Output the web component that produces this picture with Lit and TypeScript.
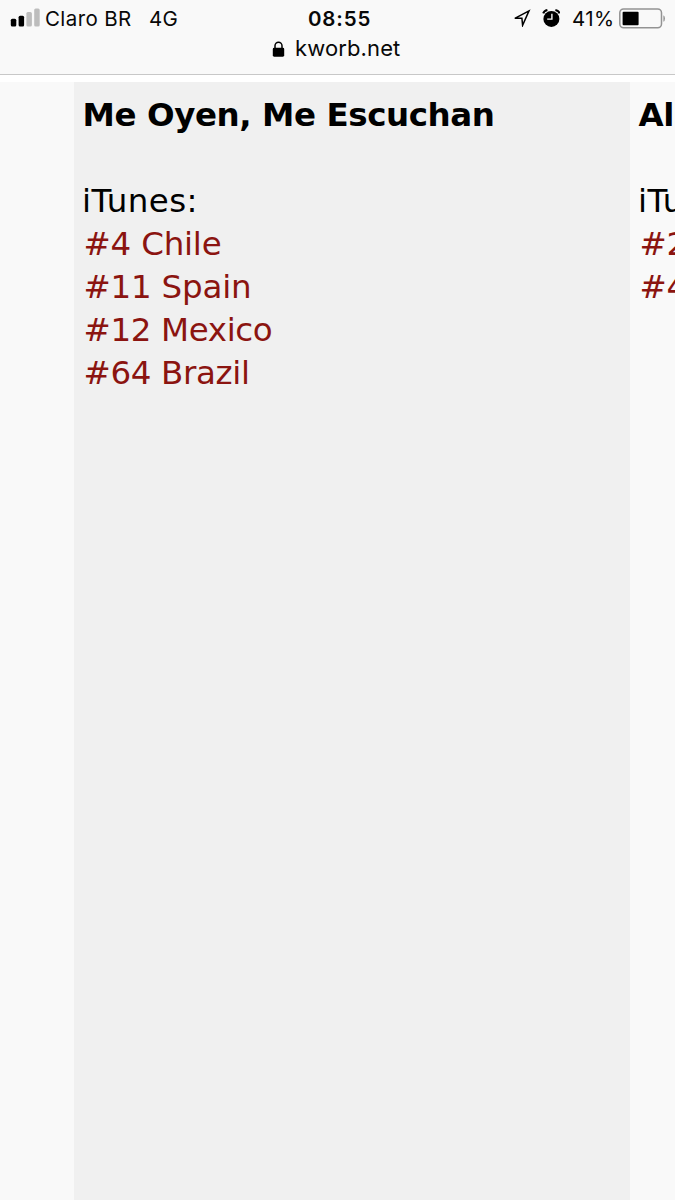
import { LitElement, html, css } from "lit";
import { customElement, property } from "lit/decorators.js";

interface Entry { text: string; cls: string }

@customElement("status-bar")
class StatusBar extends LitElement {
  static styles = css`
    :host { display: block; height: 75px; box-sizing: border-box; background: #f9f9f9; border-bottom: 1px solid #c8c8c8; color: #080808; font-family: Inter, "Liberation Sans", sans-serif; font-size: 20.5px; }
    .row { display: grid; grid-template-columns: 308px 72px 1fr; height: 37px; line-height: 37px; white-space: pre; }
    .left, .right { display: flex; align-items: center; }
    .signal { width: 30px; height: 20px; margin-left: 10px; margin-right: 5px; margin-top: -1px; flex: none; }
    .carrier { width: 104px; letter-spacing: 0.4px; }
    .net { letter-spacing: 0.3px; }
    .time { font-weight: 600; letter-spacing: 0.85px; }
    .loc { width: 18px; height: 18px; margin-left: 133px; margin-top: -2px; flex: none; }
    .alarm { width: 18px; height: 18px; margin-left: 11px; margin-top: -2px; flex: none; }
    .pct { width: 41px; margin-left: 12px; letter-spacing: 0.4px; }
    .battery { width: 47px; height: 21px; margin-left: 6px; margin-top: -1px; flex: none; }
    .address { display: flex; height: 22px; line-height: 22px; font-size: 22px; align-items: center; padding-left: 272px; letter-spacing: 0.12px; }
    .lock { width: 13px; height: 16px; margin-right: 10px; margin-top: 1px; }
  `;
  render() {
    return html`
      <div class="row">
        <div class="left">
          <svg class="signal" viewBox="0 0 30 20">
            <rect x="0.8" y="10.7" width="5.5" height="7.8" rx="1.5" fill="#000"/>
            <rect x="8.6" y="7.7" width="5.5" height="10.8" rx="1.5" fill="#000"/>
            <rect x="16.4" y="4" width="5.5" height="14.5" rx="1.5" fill="#bdbdbd"/>
            <rect x="24.2" y="0.5" width="5.5" height="18" rx="1.5" fill="#bdbdbd"/>
          </svg>
          <span class="carrier">Claro BR</span><span class="net">4G</span>
        </div>
        <div class="time">08:55</div>
        <div class="right">
          <svg class="loc" viewBox="0 0 18 18"><path d="M1.8 9.3 16 1.8 9.6 16.3 8.9 9.3Z" fill="none" stroke="#000" stroke-width="1.5" stroke-linejoin="miter"/></svg>
          <svg class="alarm" viewBox="0 0 18 18">
            <circle cx="9.4" cy="9.9" r="8" fill="#000"/>
            <path d="M1.2 4.4Q2 1.8 5.4 1M17.6 4.4Q16.8 1.8 13.4 1" fill="none" stroke="#000" stroke-width="2"/>
            <path d="M9.9 4.8V10.1H5.2" fill="none" stroke="#f9f9f9" stroke-width="1.4"/>
          </svg>
          <span class="pct">41%</span>
          <svg class="battery" viewBox="0 0 47 21">
            <rect x="0.8" y="1" width="41.7" height="18.8" rx="3.8" fill="none" stroke="#939393" stroke-width="1.5"/>
            <rect x="3.6" y="3.8" width="16" height="13.5" rx="1" fill="#000"/>
            <path d="M44.4 7.2Q46 8 46 10.5T44.4 13.8Z" fill="#939393"/>
          </svg>
        </div>
      </div>
      <div class="address">
        <svg class="lock" viewBox="0 0 13 16"><rect x="0.8" y="6.7" width="11.4" height="9" rx="1.4" fill="#000"/><path d="M3 7.5V4.7a3.5 3.5 0 0 1 7 0V7.5" fill="none" stroke="#000" stroke-width="1.5"/></svg>
        <span>kworb.net</span>
      </div>`;
  }
}

@customElement("chart-column")
class ChartColumn extends LitElement {
  @property() heading = "";
  @property({ attribute: false }) entries: Entry[] = [];
  static styles = css`
    :host { display: block; box-sizing: border-box; padding: 12px 8px; font-family: Verdana, "DejaVu Sans", sans-serif; font-size: 32.5px; line-height: 43px; color: #000; white-space: nowrap; overflow: hidden; }
    .title { font-weight: 700; margin-bottom: 43px; letter-spacing: -0.42px; padding-left: 0.5px; }
    .label { letter-spacing: 0.4px; }
    .rank { color: #8b1410; padding-left: 1.5px; letter-spacing: -0.2px; }
    .wide { letter-spacing: -0.35px; }
  `;
  render() {
    return html`
      <div class="title">${this.heading}</div>
      <div class="label">iTunes:</div>
      ${this.entries.map((e) => html`<div class="rank ${e.cls}">${e.text}</div>`)}`;
  }
}

@customElement("app-root")
class AppRoot extends LitElement {
  static styles = css`
    :host { display: flex; flex-direction: column; height: 1200px; width: 675px; overflow: hidden; background: #fff; }
    .columns { display: grid; grid-template-columns: 74px 556px 45px; flex: 1; margin-top: 7px; background: #f9f9f9; }
    .main { background: #f0f0f0; }
  `;
  render() {
    const main: Entry[] = [
      { text: "#4 Chile", cls: "" },
      { text: "#11 Spain", cls: "" },
      { text: "#12 Mexico", cls: "wide" },
      { text: "#64 Brazil", cls: "wide" },
    ];
    const next: Entry[] = ["#2", "#4"].map((text) => ({ text, cls: "" }));
    return html`
      <status-bar></status-bar>
      <div class="columns">
        <div></div>
        <chart-column class="main" heading="Me Oyen, Me Escuchan" .entries=${main}></chart-column>
        <chart-column heading="Al" .entries=${next}></chart-column>
      </div>`;
  }
}
